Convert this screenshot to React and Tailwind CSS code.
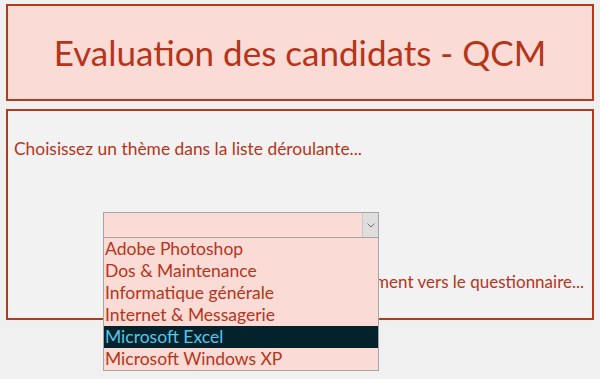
import React, { useState } from 'react';

const themes = [
  'Adobe Photoshop',
  'Dos & Maintenance',
  'Informatique générale',
  'Internet & Messagerie',
  'Microsoft Excel',
  'Microsoft Windows XP',
];

export default function App() {
  const [active, setActive] = useState('Microsoft Excel');

  return (
    <div className="min-h-screen bg-[#f0f0f0] pt-[4px] px-[6px] font-['Lato',sans-serif] text-[#b5351a]">
      {/* Title banner */}
      <div className="h-[97px] border-2 border-[#b5391c] bg-[#fbdbd5] flex items-center justify-center">
        <h1 className="text-[35px] leading-none">Evaluation des candidats - QCM</h1>
      </div>

      {/* Theme selection */}
      <div className="mt-[8px] h-[211px] border-2 border-[#b5391c] bg-[#f2f2f2] pl-[6px] pr-[8px]">
        <p className="mt-[28px] text-[17.4px] leading-[20px]">
          Choisissez un thème dans la liste déroulante...
        </p>

        <div className="relative mt-[53px] ml-[89px] w-[276px] h-[26px] border border-[#a6a6a6] bg-[#fbdbd5] flex justify-end">
          <div className="w-[16px] h-full bg-[#dedede] border-l border-[#c8c8c8] flex items-center justify-center">
            <svg width="8" height="5" viewBox="0 0 8 5" fill="none">
              <path d="M0.5 0.5L4 4L7.5 0.5" stroke="#707070" strokeWidth="1" />
            </svg>
          </div>

          {/* Open list */}
          <ul className="absolute top-full -left-px w-[276px] border border-[#a6a6a6] bg-[#fbdbd5] z-10">
            {themes.map((t) => (
              <li
                key={t}
                onMouseEnter={() => setActive(t)}
                className={`h-[22px] pl-[1px] text-[17.5px] leading-[22px] whitespace-nowrap ${
                  active === t ? 'bg-[#03222c] text-[#55c6ea]' : ''
                }`}
              >
                {t}
              </li>
            ))}
          </ul>
        </div>

        <p className="mt-[34px] text-right text-[17px] leading-[20px]">
          Vous serez redirigé automatiquement vers le questionnaire...
        </p>
      </div>
    </div>
  );
}
